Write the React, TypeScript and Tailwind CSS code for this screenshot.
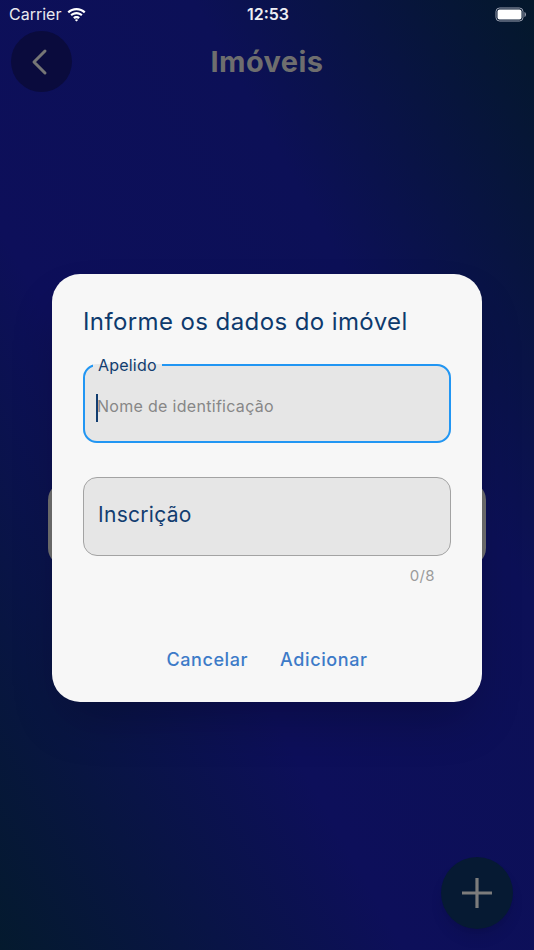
import React from 'react';

const font = { fontFamily: 'Inter, "Noto Sans", sans-serif' };

function WifiIcon() {
  return (
    <svg width="21" height="15" viewBox="0 0 21 15" fill="#ffffff">
      <path d="M10.5 3.2c2.9 0 5.5 1.1 7.5 3l1.5-1.6C17.1 2.3 13.9 1 10.5 1S3.9 2.3 1.5 4.6L3 6.2c2-1.9 4.6-3 7.5-3z" />
      <path d="M10.5 7.3c1.8 0 3.4.7 4.6 1.8l1.5-1.6c-1.6-1.5-3.8-2.4-6.1-2.4S6 6 4.4 7.5l1.5 1.6c1.2-1.1 2.8-1.8 4.6-1.8z" />
      <path d="M10.5 11.2c.7 0 1.3.3 1.8.7l1.6-1.6c-.9-.8-2.1-1.3-3.4-1.3s-2.5.5-3.4 1.3l1.6 1.6c.5-.4 1.1-.7 1.8-.7zM10.5 14.5l1.6-1.6c-.4-.4-1-.6-1.6-.6s-1.2.2-1.6.6z" />
    </svg>
  );
}

function BatteryIcon() {
  return (
    <svg width="32" height="15" viewBox="0 0 32 15">
      <rect x="1" y="1" width="27" height="13" rx="3.5" fill="none" stroke="#9aa0b0" strokeWidth="1" />
      <rect x="2.5" y="2.5" width="24" height="10" rx="2" fill="#ffffff" />
      <path d="M29.5 5v5c.9-.3 1.5-1.3 1.5-2.5S30.4 5.3 29.5 5z" fill="#9aa0b0" />
    </svg>
  );
}

export default function App() {
  return (
    <div
      className="relative w-[534px] h-[950px] overflow-hidden bg-[linear-gradient(to_bottom_left,#04182b_0%,#0c1057_32%,#0d0f5a_62%,#041a2e_100%)]"
      style={font}
    >
      {/* status bar */}
      <div className="h-[28px] flex items-center justify-between pl-[9px] pr-[7px] text-white">
        <div className="flex items-center gap-[5px] w-[120px]">
          <span className="text-[16px] leading-none text-[#e9e9ef]">Carrier</span>
          <WifiIcon />
        </div>
        <span className="text-[16px] font-semibold leading-none text-[#eeeef3]">12:53</span>
        <div className="w-[120px] flex justify-end">
          <BatteryIcon />
        </div>
      </div>

      {/* app bar */}
      <div className="relative h-[68px] flex items-center justify-center">
        <button className="absolute left-[11px] top-[3px] w-[61px] h-[61px] rounded-full bg-[#0a0b3d] flex items-center justify-center">
          <svg width="24" height="28" viewBox="0 0 24 28" className="-ml-[4px]">
            <polyline points="17,3 6,14 17,25" fill="none" stroke="#767676" strokeWidth="3" strokeLinecap="round" strokeLinejoin="round" />
          </svg>
        </button>
        <h1 className="text-[29px] font-bold text-[#6e6e6e] tracking-[0.4px] -mt-[1px]">Imóveis</h1>
      </div>

      {/* list content under the dialog */}
      <div className="px-[48px] mt-[386px]">
        <div className="h-[84px] rounded-[18px] bg-[#707070]" />
      </div>

      {/* fab */}
      <button className="absolute right-[21px] bottom-[21px] w-[72px] h-[72px] rounded-full bg-[#061a33] shadow-lg flex items-center justify-center">
        <svg width="32" height="32" viewBox="0 0 32 32">
          <path d="M16 1v30M1 16h30" stroke="#7c7c7c" strokeWidth="3.2" />
        </svg>
      </button>

      {/* dialog */}
      <div className="absolute left-[52px] top-[274px] w-[430px] h-[428px] rounded-[28px] bg-[#f7f7f7] shadow-2xl px-[31px] pt-[33px] flex flex-col">
        <h2 className="text-[24px] leading-[30px] text-[#0e3a6d] tracking-[0.4px]">Informe os dados do imóvel</h2>

        <fieldset className="mt-[18px] border-2 border-[#2196f3] rounded-[14px] bg-[#e6e6e6] min-w-0">
          <legend className="ml-[8px] px-[5px] text-[16px] leading-[20px] text-[#123d70] tracking-[0.2px]">Apelido</legend>
          <div className="h-[66px] pl-[12px] pt-[19px]">
            <span className="relative text-[16px] leading-[24px] text-[#878787] tracking-[0.3px]">
              <span className="absolute -left-[1px] -top-[2px] w-[2px] h-[28px] bg-[#123d70]" />
              Nome de identificação
            </span>
          </div>
        </fieldset>

        <div className="mt-[34px] h-[79px] rounded-[14px] border border-[#a3a3a3] bg-[#e6e6e6] flex items-center pl-[14px]">
          <span className="text-[21px] text-[#123d70] tracking-[0.3px] -mt-[4px]">Inscrição</span>
        </div>
        <div className="text-right pr-[16px] pt-[10px] text-[15px] leading-[20px] text-[#9b9b9b] tracking-[0.4px]">0/8</div>

        <div className="mt-[60px] flex justify-center gap-[32px] text-[18px] font-medium text-[#3d7bc8] tracking-[0.6px]">
          <button>Cancelar</button>
          <button>Adicionar</button>
        </div>
      </div>
    </div>
  );
}
